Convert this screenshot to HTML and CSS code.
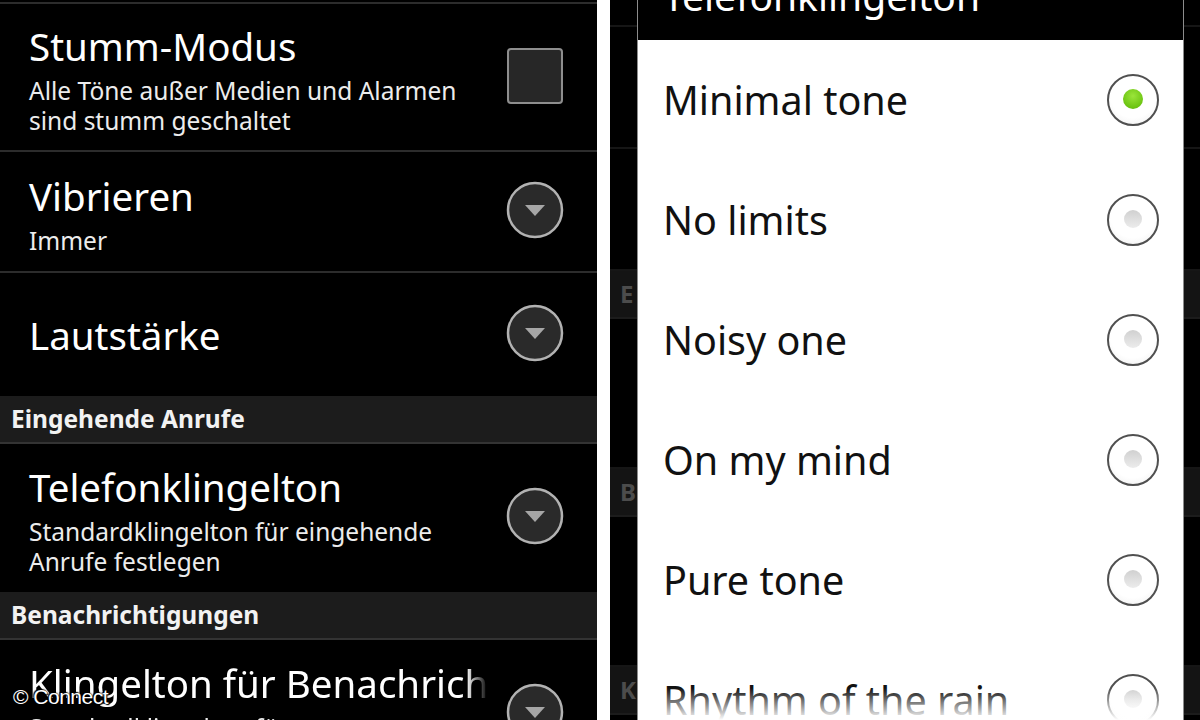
FILE: index.html
```html
<!DOCTYPE html>
<html lang="de">
<head>
    <meta charset="UTF-8">
    <title>Töne</title>
    <link rel="stylesheet" href="styles.css">
</head>
<body>
    <div class="screen">
        <section class="prefs">
            <div class="pref-row row-tall">
                <div class="pref-text">
                    <div class="pref-title">Stumm-Modus</div>
                    <div class="pref-summary">Alle Töne außer Medien und Alarmen<br>sind stumm geschaltet</div>
                </div>
                <span class="checkbox"></span>
            </div>
            <div class="pref-row row-mid">
                <div class="pref-text">
                    <div class="pref-title">Vibrieren</div>
                    <div class="pref-summary">Immer</div>
                </div>
                <svg class="dropdown" viewBox="0 0 58 58"><circle cx="29" cy="29" r="27" fill="#2a2a2a" stroke="#b2b2b2" stroke-width="2.5"/><path d="M19 24 L39 24 L29 35 Z" fill="#a6a6a6"/></svg>
            </div>
            <div class="pref-row row-single">
                <div class="pref-text">
                    <div class="pref-title">Lautstärke</div>
                </div>
                <svg class="dropdown" viewBox="0 0 58 58"><circle cx="29" cy="29" r="27" fill="#2a2a2a" stroke="#b2b2b2" stroke-width="2.5"/><path d="M19 24 L39 24 L29 35 Z" fill="#a6a6a6"/></svg>
            </div>
            <div class="pref-header">Eingehende Anrufe</div>
            <div class="pref-row row-tall">
                <div class="pref-text">
                    <div class="pref-title">Telefonklingelton</div>
                    <div class="pref-summary">Standardklingelton für eingehende<br>Anrufe festlegen</div>
                </div>
                <svg class="dropdown" viewBox="0 0 58 58"><circle cx="29" cy="29" r="27" fill="#2a2a2a" stroke="#b2b2b2" stroke-width="2.5"/><path d="M19 24 L39 24 L29 35 Z" fill="#a6a6a6"/></svg>
            </div>
            <div class="pref-header">Benachrichtigungen</div>
            <div class="pref-row row-tall">
                <div class="pref-text faded">
                    <div class="pref-title">Klingelton für Benachrichtigungen</div>
                    <div class="pref-summary">Standardklingelton für<br>Benachrichtigungen festlegen</div>
                </div>
                <svg class="dropdown" viewBox="0 0 58 58"><circle cx="29" cy="29" r="27" fill="#2a2a2a" stroke="#b2b2b2" stroke-width="2.5"/><path d="M19 24 L39 24 L29 35 Z" fill="#a6a6a6"/></svg>
            </div>
        </section>

        <div class="divider"></div>

        <section class="dialog-side">
            <!-- the settings list behind the dialog, dimmed -->
            <div class="dim-list">
                <div class="dim-row dim-first"></div>
                <div class="dim-row dim-short"></div>
                <div class="dim-row dim-short"></div>
                <div class="dim-header">E</div>
                <div class="dim-row"></div>
                <div class="dim-header">B</div>
                <div class="dim-row"></div>
                <div class="dim-header">K</div>
            </div>

            <div class="dialog">
                <div class="dialog-title"><span>Telefonklingelton</span></div>
                <ul class="tone-list">
                    <li>Minimal tone <span class="radio checked"></span></li>
                    <li>No limits <span class="radio"></span></li>
                    <li>Noisy one <span class="radio"></span></li>
                    <li>On my mind <span class="radio"></span></li>
                    <li>Pure tone <span class="radio"></span></li>
                    <li>Rhythm of the rain <span class="radio"></span></li>
                </ul>
            </div>
        </section>

        <div class="watermark">© Connect</div>
    </div>
</body>
</html>
```

FILE: styles.css
```css
body {
    margin: 0;
    background-color: #000;
    font-family: "Noto Sans", "Open Sans", sans-serif;
}

.screen {
    position: relative;
    display: flex;
    width: 1200px;
    height: 720px;
    overflow: hidden;
}

/* left phone: settings list */

.prefs {
    flex: none;
    width: 597px;
    padding-top: 2px;
    background-color: #000;
    color: #fff;
}

.pref-row {
    box-sizing: border-box;
    display: flex;
    align-items: center;
    padding: 0 34px 0 29px;
    border-top: 2px solid #2c2c2c;
}

.pref-header + .pref-row {
    border-top: 0;
}

.row-tall {
    height: 148px;
}

.row-mid {
    height: 121px;
}

.row-single {
    height: 125px;
}

.pref-text {
    flex: 1;
    min-width: 0;
    margin-right: 18px;
    padding-top: 6px;
}

.row-single .pref-text {
    padding-top: 0;
}

.pref-text.faded {
    white-space: nowrap;
    overflow: hidden;
    -webkit-mask-image: linear-gradient(to right, #000 calc(100% - 22px), transparent);
    mask-image: linear-gradient(to right, #000 calc(100% - 22px), transparent);
}

.pref-title {
    font-size: 38.5px;
    line-height: 44px;
}

.pref-summary {
    margin-top: 8px;
    font-size: 24.5px;
    line-height: 30px;
    color: #ececec;
}

.pref-header {
    box-sizing: border-box;
    height: 48px;
    padding-left: 11px;
    background-color: #1c1c1c;
    border-bottom: 2px solid #333;
    font-size: 24.5px;
    font-weight: bold;
    line-height: 46px;
    color: #f2f2f2;
}

.checkbox {
    flex: none;
    box-sizing: border-box;
    width: 56px;
    height: 56px;
    margin-bottom: 2px;
    border: 2px solid #8e8e8e;
    border-radius: 4px;
    background-color: #272727;
}

.dropdown {
    flex: none;
    width: 58px;
    height: 58px;
    margin: 0 -1px 4px 0;
}

.divider {
    flex: none;
    width: 13px;
    background-color: #fff;
}

/* right phone: ringtone dialog */

.dialog-side {
    position: relative;
    flex: 1;
    background-color: #000;
}

.dim-list {
    display: flex;
    flex-direction: column;
}

.dim-row {
    height: 148px;
    border-bottom: 2px solid #161616;
}

.dim-first {
    height: 25px;
}

.dim-short {
    height: 120px;
}

.dim-header {
    height: 46px;
    padding-left: 10px;
    background-color: #141414;
    border-bottom: 2px solid #1c1c1c;
    font-size: 24px;
    font-weight: bold;
    line-height: 46px;
    color: #4c4c4c;
}

.dialog {
    position: absolute;
    top: 0;
    left: 27px;
    right: 16px;
    bottom: -60px;
    border-left: 1px solid #8c8c8c;
    border-right: 1px solid #8c8c8c;
    background-color: #fff;
}

.dialog::after {
    content: "";
    position: absolute;
    left: 0;
    right: 0;
    top: 688px;
    height: 40px;
    background: linear-gradient(to bottom, rgba(255, 255, 255, 0), #fff 80%);
}

.dialog-title {
    height: 40px;
    overflow: hidden;
    padding-left: 25px;
    background-color: #000;
    color: #fff;
}

.dialog-title span {
    display: block;
    margin-top: -24px;
    font-size: 39px;
    line-height: 40px;
}

.tone-list {
    margin: 0;
    padding: 0;
    list-style: none;
}

.tone-list li {
    display: flex;
    align-items: center;
    justify-content: space-between;
    height: 120px;
    padding: 0 24px 0 25px;
    font-size: 39.5px;
    color: #111;
}

.radio {
    position: relative;
    box-sizing: border-box;
    width: 52px;
    height: 52px;
    border: 2.5px solid #505050;
    border-radius: 50%;
    background: radial-gradient(circle at 50% 40%, #fff 60%, #ececec);
}

.radio::after {
    content: "";
    position: absolute;
    top: 50%;
    left: 50%;
    width: 18px;
    height: 18px;
    margin: -10px 0 0 -9px;
    border-radius: 50%;
    background: linear-gradient(to bottom, #d0d0d0, #ececec);
}

.radio.checked::after {
    width: 20px;
    height: 20px;
    margin: -11px 0 0 -10px;
    background: radial-gradient(circle at 50% 35%, #9be53a, #6cc412 70%, #5aa80c);
}

.watermark {
    position: absolute;
    left: 13px;
    top: 685px;
    font-family: "Liberation Sans", Arial, sans-serif;
    font-size: 21px;
    letter-spacing: -0.5px;
    color: #fff;
    text-shadow: 0 0 2px #000, 1px 1px 1px #000, -1px -1px 1px #000;
}
```
